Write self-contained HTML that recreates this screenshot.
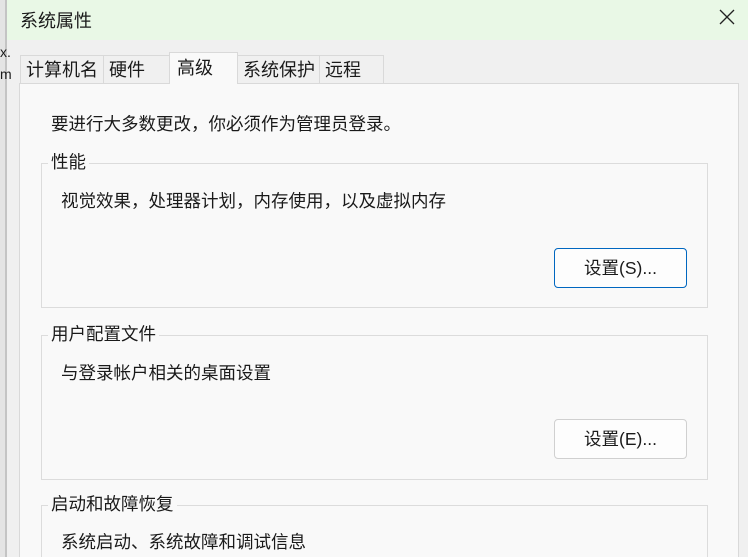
<!DOCTYPE html>
<html style="width:748px;height:557px;overflow:hidden"><head><meta charset="utf-8"><style>
*{margin:0;padding:0;box-sizing:border-box}
body{width:748px;height:557px;overflow:hidden;background:#f0f0f0;font-family:"Liberation Sans","Noto Sans CJK SC",sans-serif;font-size:17.5px;color:#1a1a1a;position:relative}
.a{position:absolute}
.strip{left:0;top:0;width:5px;height:557px;background:#e4e4e4}
.edge{left:5px;top:0;width:2px;height:557px;background:#c4c4c4}
.title{left:7px;top:0;width:741px;height:40px;background:#e9f8e6}
.tab{position:absolute;top:55px;height:28px;border:1px solid #d9d9d9;border-bottom:none;background:#f0f0f0;padding-left:5px;line-height:28px;white-space:nowrap;font-size:18px}
.page{left:19px;top:83px;width:720px;height:474px;background:#f9f9f9;border:1px solid #d9d9d9;border-bottom:none}
.grp{position:absolute;left:41px;width:667px;border:1px solid #dcdcdc}
.lbl{position:absolute;left:48px;background:#f9f9f9;padding:0 3px;line-height:20px}
.btn{position:absolute;left:554px;width:133px;height:40px;border:1px solid #d0d0d0;border-radius:4px;background:#fdfdfd;text-align:center;line-height:38px}
</style></head><body>
<div class="a strip"></div><div class="a edge"></div>
<div class="a" style="left:0;top:44px;font-size:14px">x.</div>
<div class="a" style="left:0;top:66px;font-size:14px">m</div>
<div class="a title"></div>
<div class="a" style="left:20px;top:7px;font-size:18px">系统属性</div>
<svg class="a" style="left:719px;top:9px" width="16" height="16"><path d="M1 1L15 15M15 1L1 15" stroke="#222" stroke-width="1.3"/></svg>
<div class="a page"></div>
<div class="tab" style="left:20px;width:84px">计算机名</div>
<div class="tab" style="left:103px;width:67px">硬件</div>
<div class="tab" style="left:319px;width:65px">远程</div>
<div class="tab" style="left:237px;width:83px">系统保护</div>
<div class="tab" style="left:169px;top:52px;height:32px;width:69px;background:#f9f9f9;padding-left:7px;line-height:30px">高级</div>
<div class="a" style="left:51px;top:111px">要进行大多数更改，你必须作为管理员登录。</div>
<div class="grp" style="top:163px;height:145px"></div>
<div class="lbl" style="top:152px">性能</div>
<div class="a" style="left:61px;top:188px">视觉效果，处理器计划，内存使用，以及虚拟内存</div>
<div class="btn" style="top:248px;border-color:#0067c0">设置(S)...</div>
<div class="grp" style="top:335px;height:145px"></div>
<div class="lbl" style="top:324px">用户配置文件</div>
<div class="a" style="left:61px;top:360px">与登录帐户相关的桌面设置</div>
<div class="btn" style="top:419px">设置(E)...</div>
<div class="grp" style="top:505px;height:52px;border-bottom:none"></div>
<div class="lbl" style="top:494px">启动和故障恢复</div>
<div class="a" style="left:61px;top:530px;line-height:24px">系统启动、系统故障和调试信息</div>
</body></html>
